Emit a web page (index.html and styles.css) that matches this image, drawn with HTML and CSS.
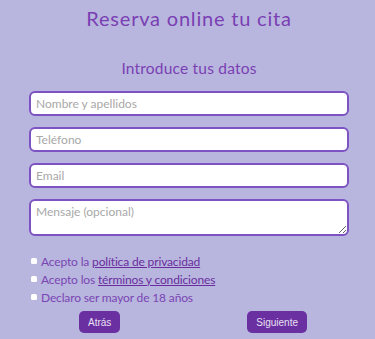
FILE: index.html
```html
<!DOCTYPE html>
<html lang="es">
<head>
<meta charset="utf-8">
<title>Reserva online tu cita</title>
<link rel="stylesheet" href="styles.css">
</head>
<body>
<main class="page">
  <h1 class="title">Reserva online tu cita</h1>
  <h2 class="subtitle">Introduce tus datos</h2>
  <form class="form">
    <input class="field" type="text" placeholder="Nombre y apellidos">
    <input class="field" type="tel" placeholder="Teléfono">
    <input class="field" type="email" placeholder="Email">
    <textarea class="field area" placeholder="Mensaje (opcional)"></textarea>
    <div class="checks">
      <label class="check"><input type="checkbox" class="box"><span>Acepto la <a href="#" class="link">política de privacidad</a></span></label>
      <label class="check"><input type="checkbox" class="box"><span>Acepto los <a href="#" class="link">términos y condiciones</a></span></label>
      <label class="check"><input type="checkbox" class="box"><span>Declaro ser mayor de 18 años</span></label>
    </div>
    <div class="actions">
      <button type="button" class="btn">Atrás</button>
      <button type="button" class="btn">Siguiente</button>
    </div>
  </form>
</main>
</body>
</html>
```
FILE: styles.css
```css
html, body {
  margin: 0;
  padding: 0;
  background: #b8b6de;
}
body {
  font-family: Lato, "Open Sans", sans-serif;
  color: #7a3fb3;
}
.page {
  width: 375px;
  height: 339px;
  padding-left: 3px;
  box-sizing: border-box;
  overflow: hidden;
  display: flex;
  flex-direction: column;
  align-items: center;
}
.title {
  margin: 5px 0 0;
  font-size: 20px;
  font-weight: 400;
  line-height: 26px;
  color: #7a3fb3;
  letter-spacing: 0.8px;
}
.subtitle {
  margin: 27px 0 0;
  font-size: 15.5px;
  font-weight: 400;
  line-height: 20px;
  color: #7a3fb3;
  letter-spacing: 0.2px;
}
.form {
  width: 320px;
  margin-top: 13px;
  display: flex;
  flex-direction: column;
}
.field {
  box-sizing: border-box;
  display: block;
  width: 320px;
  height: 25px;
  margin: 0 0 11px;
  padding: 0 5px;
  border: 2px solid #7d52c2;
  border-radius: 6px;
  background: #fff;
  font-family: Lato, "Open Sans", sans-serif;
  font-size: 12px;
  color: #333;
  outline: none;
}
.field::placeholder {
  color: #a8a8a8;
}
.area {
  height: 37px;
  padding: 3px 5px;
  resize: vertical;
  margin-bottom: 16px;
}
.checks {
  display: flex;
  flex-direction: column;
}
.check {
  display: flex;
  align-items: center;
  height: 18px;
  font-size: 12px;
  letter-spacing: -0.15px;
  color: #7a45b3;
}
.box {
  appearance: none;
  -webkit-appearance: none;
  width: 6px;
  height: 6px;
  margin: 0 4px 0 2px;
  background: #fff;
  border-radius: 1.5px;
  border: none;
}
.link {
  color: #6a2d9e;
  text-decoration: underline;
}
.actions {
  display: flex;
  justify-content: space-between;
  padding: 0 42px 0 50px;
  margin-top: 5px;
}
.btn {
  height: 22px;
  padding: 0 9px;
  border: none;
  border-radius: 5px;
  background: #6a2fa0;
  color: #e8e0f4;
  font-family: "Liberation Sans", Arial, sans-serif;
  font-size: 10px;
}
```
